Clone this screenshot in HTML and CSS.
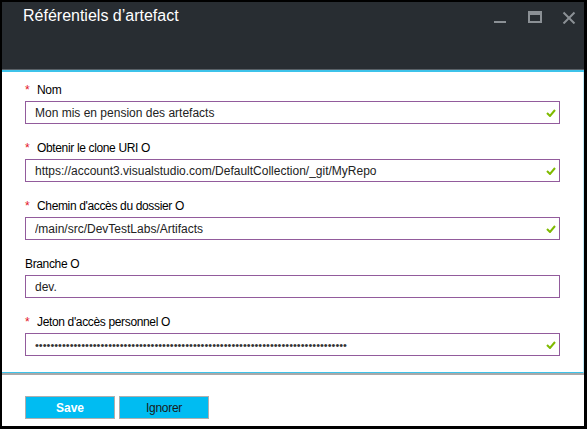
FILE: index.html
```html
<!DOCTYPE html>
<html lang="fr">
<head>
<meta charset="utf-8">
<title>Référentiels d’artefact</title>
<link rel="stylesheet" href="styles.css">
</head>
<body>
<div class="window">
  <header class="titlebar">
    <h1 class="title">Référentiels d’artefact</h1>
    <div class="controls">
      <svg class="ctl" width="16" height="14" viewBox="0 0 16 14"><rect x="2" y="11" width="12" height="2" fill="#8b9095"/></svg>
      <svg class="ctl ctl-max" width="16" height="14" viewBox="0 0 16 14"><path d="M1 1h14v12H1z M3 5v6h10V5z" fill="#8b9095" fill-rule="evenodd"/></svg>
      <svg class="ctl ctl-close" width="16" height="14" viewBox="0 0 16 14"><path d="M2.5 2.5l11 11M13.5 2.5l-11 11" stroke="#8b9095" stroke-width="2" fill="none"/></svg>
    </div>
  </header>
  <main class="form">
    <div class="field">
      <label class="label"><span class="req">*</span>Nom</label>
      <div class="box">
        <input class="input" type="text" value="Mon mis en pension des artefacts">
        <svg class="check" width="10" height="8" viewBox="0 0 10 8"><path d="M1 4l3 3 5-6" stroke="#7fba00" stroke-width="2" fill="none"/></svg>
      </div>
    </div>
    <div class="field">
      <label class="label"><span class="req">*</span>Obtenir le clone URI O</label>
      <div class="box">
        <input class="input" type="text" value="https://account3.visualstudio.com/DefaultCollection/_git/MyRepo">
        <svg class="check" width="10" height="8" viewBox="0 0 10 8"><path d="M1 4l3 3 5-6" stroke="#7fba00" stroke-width="2" fill="none"/></svg>
      </div>
    </div>
    <div class="field">
      <label class="label"><span class="req">*</span>Chemin d'accès du dossier O</label>
      <div class="box">
        <input class="input" type="text" value="/main/src/DevTestLabs/Artifacts">
        <svg class="check" width="10" height="8" viewBox="0 0 10 8"><path d="M1 4l3 3 5-6" stroke="#7fba00" stroke-width="2" fill="none"/></svg>
      </div>
    </div>
    <div class="field">
      <label class="label">Branche O</label>
      <div class="box">
        <input class="input" type="text" value="dev.">
      </div>
    </div>
    <div class="field">
      <label class="label"><span class="req">*</span>Jeton d'accès personnel O</label>
      <div class="box">
        <input class="input input-pass" type="password" value="xxxxxxxxxxxxxxxxxxxxxxxxxxxxxxxxxxxxxxxxxxxxxxxxxxxxxxxxxxxxxxxxxxxxxxxxxxxxxxxxx">
        <svg class="check" width="10" height="8" viewBox="0 0 10 8"><path d="M1 4l3 3 5-6" stroke="#7fba00" stroke-width="2" fill="none"/></svg>
      </div>
    </div>
  </main>
  <footer class="footer">
    <button class="btn btn-save" type="button">Save</button>
    <button class="btn" type="button">Ignorer</button>
  </footer>
</div>
</body>
</html>
```
FILE: styles.css
```css
html, body {
  margin: 0;
  padding: 0;
  background: #000;
}
body {
  width: 587px;
  height: 429px;
  overflow: hidden;
  font-family: "Liberation Sans", Arial, sans-serif;
}
.window {
  margin: 2px 3px 3px 2px;
  width: 582px;
  height: 424px;
  display: flex;
  flex-direction: column;
  background: #fff;
}
.titlebar {
  height: 67px;
  background: #282d32;
  border-bottom: 1px solid #5a6066;
  box-shadow: 0 2px 0 #3ec3ea;
  display: flex;
  justify-content: space-between;
  align-items: flex-start;
  position: relative;
  z-index: 1;
}
.title {
  margin: 4px 0 0 21px;
  font-size: 16px;
  line-height: 20px;
  font-weight: normal;
  color: #fff;
}
.controls {
  display: flex;
  margin: 8px 7px 0 0;
  gap: 19px;
}
.ctl-close {
  margin-left: -1px;
}
.form {
  padding: 12px 23px 16px 23px;
  border-right: 1px solid #bfe9f6;
  border-bottom: 1px solid #3ec3ea;
  box-shadow: 0 2px 0 #a9a9a9;
  position: relative;
}
.field {
  display: flex;
  flex-direction: column;
  margin-bottom: 16px;
}
.field:last-child {
  margin-bottom: 0;
}
.label {
  font-size: 12px;
  line-height: 16px;
  height: 16px;
  margin-bottom: 3px;
  color: #000;
  letter-spacing: -0.35px;
}
.req {
  color: #e3161f;
  display: inline-block;
  width: 12px;
  letter-spacing: 0;
}
.box {
  position: relative;
  height: 23px;
}
.input {
  box-sizing: border-box;
  width: 535px;
  height: 23px;
  margin: 0;
  border: 1px solid #925b9c;
  padding: 0 24px 0 9px;
  font-family: "Liberation Sans", Arial, sans-serif;
  font-size: 12px;
  color: #222;
  background: #fff;
  outline: none;
}
.input-pass {
  font-size: 11px;
  letter-spacing: 0;
  color: #333;
}
.check {
  position: absolute;
  right: 4px;
  top: 8px;
}
.footer {
  flex: 1;
  display: flex;
  align-items: flex-start;
  gap: 4px;
  padding: 21px 0 0 23px;
  margin-top: 2px;
  border-right: 1px solid #fff;
}
.btn {
  width: 90px;
  height: 23px;
  margin: 0;
  padding: 0;
  border: 1px solid #aeaeae;
  background: #00bcf2;
  font-family: "Liberation Sans", Arial, sans-serif;
  font-size: 12px;
  color: #1a1a1a;
  letter-spacing: -0.3px;
}
.btn-save {
  color: #fff;
  font-weight: bold;
  letter-spacing: 0;
}
```
